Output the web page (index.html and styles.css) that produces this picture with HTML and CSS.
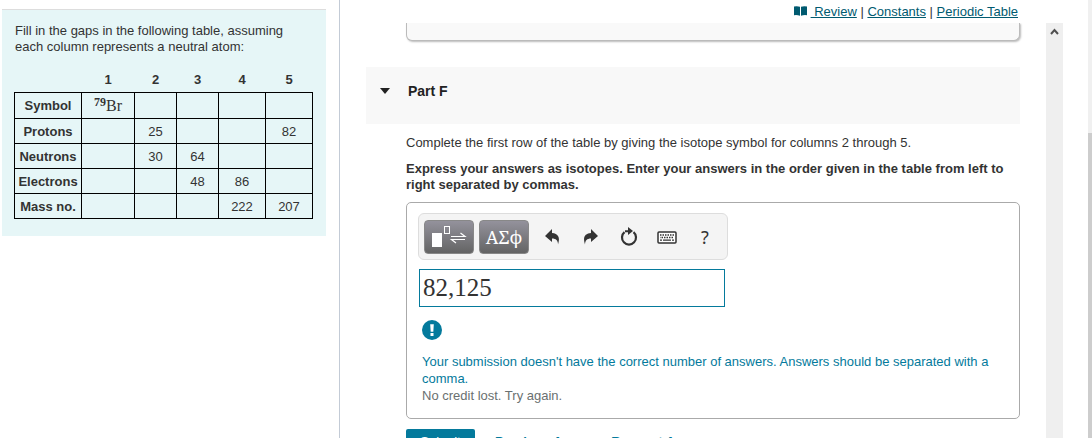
FILE: index.html
```html
<!DOCTYPE html>
<html lang="en">
<head>
    <meta charset="UTF-8">
    <meta name="viewport" content="width=device-width, initial-scale=1.0">
    <title>Part F</title>
    <link rel="stylesheet" href="styles.css">
</head>
<body>
<!-- Problem introduction -->
<aside class="sidebar">
    <div class="intro">
        <p>Fill in the gaps in the following table, assuming each column represents a neutral atom:</p>
        <table class="atoms">
            <colgroup>
                <col class="col-label">
                <col class="col-wide">
                <col class="col-narrow">
                <col class="col-narrow">
                <col class="col-medium">
                <col class="col-medium">
            </colgroup>
            <thead>
                <tr><td></td><th scope="col">1</th><th scope="col">2</th><th scope="col">3</th><th scope="col">4</th><th scope="col">5</th></tr>
            </thead>
            <tbody>
                <tr><th scope="row">Symbol</th><td class="isotope"><sup>79</sup>Br</td><td></td><td></td><td></td><td></td></tr>
                <tr><th scope="row">Protons</th><td></td><td>25</td><td></td><td></td><td>82</td></tr>
                <tr><th scope="row">Neutrons</th><td></td><td>30</td><td>64</td><td></td><td></td></tr>
                <tr><th scope="row">Electrons</th><td></td><td></td><td>48</td><td>86</td><td></td></tr>
                <tr><th scope="row">Mass no.</th><td></td><td></td><td></td><td>222</td><td>207</td></tr>
            </tbody>
        </table>
    </div>
</aside>

<main class="main">
    <nav class="links">
        <svg class="book" viewBox="0 0 13 10" aria-hidden="true">
            <path d="M0 .5Q3 -.3 6 .7V9.700Q3 8.700 0 9.200ZM7 .7Q10 -.3 13 .5V9.200Q10 8.700 7 9.700Z" fill="#005a70"/>
        </svg>
        <a href="#review">&nbsp;Review</a> | <a href="#constants">Constants</a> | <a href="#table">Periodic Table</a>
    </nav>

    <div class="pane">
        <div class="content">
            <div class="previous-part"></div>

            <button type="button" class="part-header">
                <svg class="caret" viewBox="0 0 10 6" aria-hidden="true"><path d="M0 0H10L5 6Z" fill="#222"/></svg>
                <span>Part F</span>
            </button>

            <form class="part">
                <p>Complete the first row of the table by giving the isotope symbol for columns 2 through 5.</p>
                <p class="instructions"><label for="answer">Express your answers as isotopes. Enter your answers in the order given in the table from left to right separated by commas.</label></p>

                <div class="answer-box">
                    <div class="toolbar">
                        <button type="button" class="palette" aria-label="Templates">
                            <svg viewBox="0 0 48 32" aria-hidden="true">
                                <rect x="7" y="12" width="10" height="14" fill="#fff"/>
                                <rect x="19.500" y="5.500" width="5" height="7" fill="none" stroke="#fff"/>
                                <path d="M26 15.500H40L35.500 12M40 18.500H26.500L31 22" fill="none" stroke="#fff" stroke-width="1.200"/>
                            </svg>
                        </button>
                        <button type="button" class="palette">ΑΣϕ</button>
                        <button type="button" class="tool" aria-label="Undo">
                            <svg viewBox="0 0 16 16" aria-hidden="true"><path d="M0 7L7 0V4C13 4.500 15.500 8 13 15.500C13 11.500 11 9.500 7 9.500V13Z" fill="#333"/></svg>
                        </button>
                        <button type="button" class="tool" aria-label="Redo">
                            <svg viewBox="0 0 16 16" aria-hidden="true"><path d="M15 7L8 0V4C2 4.500 -.5 8 2 15.500C2 11.500 4 9.500 8 9.500V13Z" fill="#333"/></svg>
                        </button>
                        <button type="button" class="tool" aria-label="Reset">
                            <svg class="reset" viewBox="0 0 18 20" aria-hidden="true">
                                <path d="M4.500 5.200A7 7 0 1 0 13.500 5.200" fill="none" stroke="#333" stroke-width="2.200"/>
                                <path d="M8 0L13 4L8 8V5.200H5V3.200H8Z" fill="#333"/>
                            </svg>
                        </button>
                        <button type="button" class="tool" aria-label="Keyboard">
                            <svg class="keyboard" viewBox="0 0 20 14" aria-hidden="true">
                                <rect x="1" y="2" width="18" height="11" rx="1" fill="#fff" stroke="#333" stroke-width="1.500"/>
                                <path d="M3 5H17" stroke="#333" stroke-width="1.500" stroke-dasharray="1.500 1"/>
                                <path d="M3 7.500H17" stroke="#333" stroke-width="1.500" stroke-dasharray="1.500 1" stroke-dashoffset="1"/>
                                <path d="M3 10.200H5M6 10.200H14M15 10.200H17" stroke="#333" stroke-width="1.300"/>
                            </svg>
                        </button>
                        <button type="button" class="tool help">?</button>
                    </div>

                    <input type="text" id="answer" name="answer" class="answer" value="82,125">

                    <div class="feedback">
                        <svg class="alert" viewBox="0 0 20 20" aria-hidden="true">
                            <circle cx="10" cy="10" r="10" fill="#047a9c"/>
                            <path d="M8.200 4.200H11.800L11.300 11.800H8.700Z" fill="#fff"/>
                            <rect x="8.500" y="13" width="3" height="3" fill="#fff"/>
                        </svg>
                        <p class="message">Your submission doesn't have the correct number of answers. Answers should be separated with a comma.</p>
                        <p class="credit">No credit lost. Try again.</p>
                    </div>
                </div>

                <div class="actions">
                    <button type="submit" class="submit">Submit</button>
                    <a href="#previous">Previous Answers</a>
                    <a href="#request">Request Answer</a>
                </div>
            </form>
        </div>
        <div class="pane-scroll">
            <svg viewBox="0 0 9 7" aria-hidden="true"><path d="M1 6L4.500 2L8 6" fill="none" stroke="#505050" stroke-width="2"/></svg>
        </div>
    </div>
</main>
<div class="page-scroll"></div>
</body>
</html>
```
FILE: styles.css
```css
* {
    box-sizing: border-box;
}

body {
    margin: 0;
    height: 100vh;
    display: flex;
    overflow: hidden;
    background: #fff;
    color: #333;
    font: 13px/16px "Liberation Sans", Arial, sans-serif;
}

p {
    margin: 0;
}

button {
    padding: 0;
    border: 0;
    background: none;
    color: inherit;
    font: inherit;
}

/* Introduction */
.sidebar {
    flex: none;
    width: 340px;
    padding: 9px 13px 0 2px;
    border-right: 1px solid #c3cbd6;
}

.intro {
    padding: 13px 12px 17px;
    border-top: 1px solid #ddd;
    background: #e6f6f7;
}

.intro p {
    padding: 0 24px 0 1px;
}

.atoms {
    width: 299px;
    margin-top: 12px;
    border-collapse: collapse;
    table-layout: fixed;
    text-align: center;
}

.col-label {
    width: 67px;
}

.col-wide {
    width: 53px;
}

.col-narrow {
    width: 42px;
}

.col-medium {
    width: 47px;
}

.atoms th,
.atoms td {
    height: 25px;
    padding: 2px 0 0;
}

.atoms tbody th,
.atoms tbody td {
    border: 1px solid #000;
}

.atoms .isotope {
    height: 26px;
    font: 16px/16px "Liberation Serif", "Times New Roman", serif;
}

.isotope sup {
    font-size: 12px;
    font-weight: bold;
    line-height: 0;
    vertical-align: 5px;
}

/* Right column */
.main {
    flex: 1;
    min-width: 0;
    display: flex;
    flex-direction: column;
    padding-right: 25px;
}

.links {
    flex: none;
    height: 23px;
    padding: 4px 45px 0 0;
    text-align: right;
}

a {
    color: #005a70;
}

.book {
    width: 13px;
    height: 10px;
}

.pane {
    flex: 1;
    min-height: 0;
    display: flex;
}

.content {
    flex: 1;
    padding: 0 26px;
    overflow: hidden;
}

.previous-part {
    height: 18px;
    margin-left: 40px;
    border: 1px solid #bbb;
    border-top: 0;
    border-radius: 0 0 6px 6px;
    background: #f9f9f9;
    box-shadow: 1px 1px 2px #bbb;
}

.part-header {
    display: flex;
    align-items: center;
    gap: 18px;
    width: 100%;
    height: 57px;
    margin-top: 26px;
    padding: 0 14px 9px;
    background: #f8f8f8;
    color: #222;
    font-size: 14px;
    font-weight: bold;
}

.caret {
    width: 10px;
    height: 6px;
}

.part {
    padding: 11px 0 0 40px;
}

.instructions {
    margin-top: 10px;
    font-weight: bold;
}

.answer-box {
    margin-top: 9px;
    padding: 10px 11px 14px;
    border: 1px solid #aaa;
    border-radius: 5px;
}

.toolbar {
    display: flex;
    align-items: center;
    width: 310px;
    height: 47px;
    padding-left: 5px;
    border: 1px solid #ddd;
    border-radius: 6px;
    background: #f4f4f4;
}

.palette {
    flex: none;
    width: 50px;
    height: 34px;
    margin-right: 5px;
    border: 1px solid #888;
    border-radius: 4px;
    background: linear-gradient(#94929c, #646464);
    color: #fff;
    font: 18px/30px "Noto Serif", "Liberation Serif", serif;
}

.palette svg {
    display: block;
}

.tool {
    flex: none;
    display: flex;
    align-items: center;
    justify-content: center;
    width: 38px;
    height: 34px;
}

.tool svg {
    width: 16px;
    height: 16px;
}

.tool .reset {
    width: 18px;
    height: 20px;
}

.tool .keyboard {
    width: 20px;
    height: 14px;
}

.help {
    font: 18px/20px "Noto Sans", sans-serif;
}

.answer {
    display: block;
    width: 306px;
    height: 38px;
    margin: 9px 0 0 1px;
    padding: 0 3px;
    border: 1px solid #047a9c;
    background: #fff;
    color: #333;
    font: 25px/30px "Liberation Serif", "Times New Roman", serif;
}

.feedback {
    padding: 13px 4px 0;
    line-height: 17px;
}

.alert {
    display: block;
    width: 20px;
    height: 20px;
    margin-bottom: 13px;
}

.message {
    color: #047a9c;
}

.credit {
    color: #6a7070;
}

.actions {
    display: flex;
    gap: 4px;
    margin-top: 10px;
    line-height: 26px;
}

.actions a {
    color: #047a9c;
    font-weight: bold;
    text-decoration: none;
}

.submit {
    width: 69px;
    height: 26px;
    margin-right: 16px;
    border-radius: 2px;
    background: #047a9c;
    color: #fff;
}

/* Scroll tracks */
.pane-scroll {
    flex: none;
    width: 17px;
    background: #efefef;
    text-align: center;
}

.pane-scroll svg {
    width: 9px;
    height: 7px;
}

.page-scroll {
    flex: none;
    width: 4px;
    padding-top: 133px;
    background: #f0f0f0;
}

.page-scroll::before {
    content: "";
    display: block;
    height: 100%;
    background: #cdcdcd;
}
```
